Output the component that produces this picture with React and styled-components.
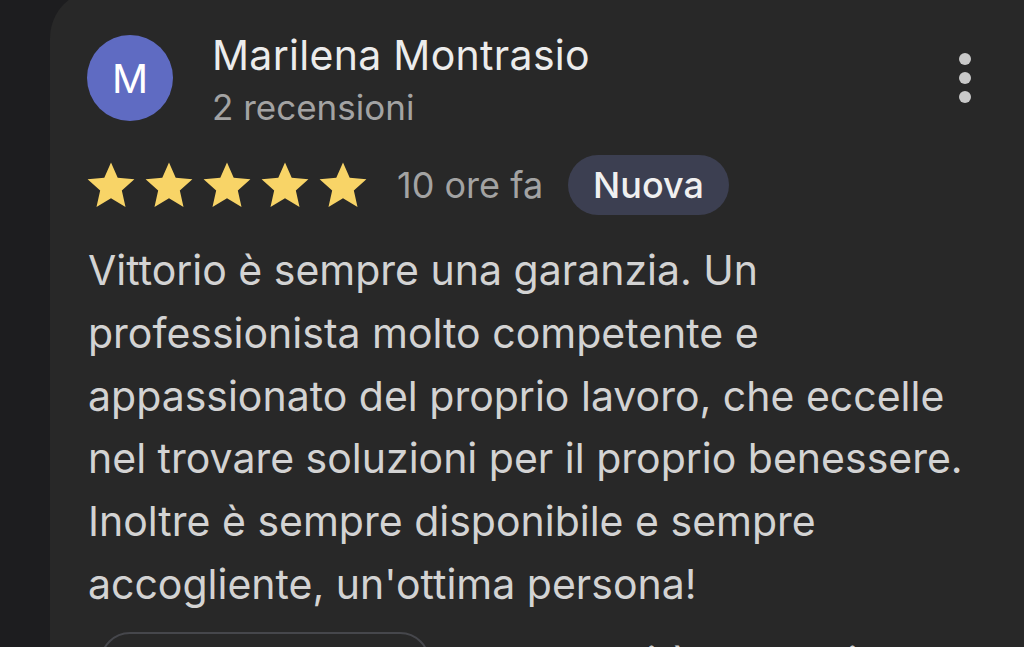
import React from 'react'
import styled, { createGlobalStyle } from 'styled-components'

const GlobalStyle = createGlobalStyle`
  html, body {
    margin: 0;
    padding: 0;
    background: #1d1d1f;
    overflow: hidden;
  }
  body {
    font-family: Inter, "Liberation Sans", Arial, sans-serif;
    -webkit-font-smoothing: antialiased;
  }
`

const Page = styled.div`
  width: 1024px;
  height: 647px;
  overflow: hidden;
  padding-left: 50px;
  box-sizing: border-box;
`

const Card = styled.div`
  width: 1000px;
  margin-top: -10px;
  box-sizing: border-box;
  background: #282828;
  border-radius: 48px 0 0 0;
  padding: 40px 70px 0 37px;
  display: flex;
  flex-direction: column;
`

const Header = styled.div`
  display: flex;
  align-items: flex-start;
`

const Avatar = styled.div`
  width: 86px;
  height: 86px;
  margin-top: 5px;
  border-radius: 50%;
  background: #5f6bc2;
  color: #fff;
  display: flex;
  align-items: center;
  justify-content: center;
  font-size: 40px;
  font-weight: 400;
  flex-shrink: 0;
`

const Who = styled.div`
  margin-left: 39px;
  flex: 1;
  display: flex;
  flex-direction: column;
  gap: 5px;
`

const Name = styled.div`
  font-size: 41px;
  line-height: 50px;
  color: #ececec;
  letter-spacing: 0.3px;
`

const Sub = styled.div`
  font-size: 35px;
  line-height: 44px;
  color: #a3a3a3;
`

const Kebab = styled.button`
  background: none;
  border: 0;
  padding: 0;
  margin: 23px 0 0 0;
  width: 30px;
  display: flex;
  flex-direction: column;
  align-items: center;
  gap: 7px;
`

const Dot = styled.span`
  width: 12px;
  height: 12px;
  border-radius: 50%;
  background: #c9c9c9;
`

const Meta = styled.div`
  display: flex;
  align-items: center;
  margin-top: 26px;
  height: 60px;
`

const Stars = styled.div`
  display: flex;
  gap: 6px;
  margin-left: -2px;
`

const When = styled.span`
  margin-left: 28px;
  font-size: 36px;
  color: #a3a3a3;
`

const Badge = styled.span`
  margin-left: 25px;
  height: 60px;
  padding: 0 25px;
  border-radius: 30px;
  background: #3c3f51;
  color: #f0f0f0;
  font-size: 36px;
  font-weight: 500;
  display: flex;
  align-items: center;
`

const Body = styled.p`
  margin: 24px 0 0 1px;
  font-size: 41px;
  line-height: 62.8px;
  color: #d3d3d3;
  white-space: nowrap;
`

const Actions = styled.div`
  display: flex;
  align-items: flex-start;
  margin-top: 16px;
`

const OutlineButton = styled.button`
  margin-left: 13px;
  width: 330px;
  height: 60px;
  border: 2px solid #46474c;
  border-radius: 30px;
  background: transparent;
`

const LinkText = styled.span`
  margin-left: 190px;
  margin-top: 6px;
  font-size: 41px;
  line-height: 48px;
  color: #cfcfcf;
`

const Star = () => (
  <svg width="52" height="52" viewBox="0 0 24 24">
    <path
      fill="#f8d467"
      d="M12 1.6l3.1 7.1 7.7.7-5.8 5.1 1.7 7.6L12 18.1l-6.7 4 1.7-7.6-5.8-5.1 7.7-.7z"
    />
  </svg>
)

const lines = [
  'Vittorio è sempre una garanzia. Un',
  'professionista molto competente e',
  'appassionato del proprio lavoro, che eccelle',
  'nel trovare soluzioni per il proprio benessere.',
  'Inoltre è sempre disponibile e sempre',
  "accogliente, un'ottima persona!",
]

export default function App() {
  return (
    <>
      <GlobalStyle />
      <Page>
        <Card>
          <Header>
            <Avatar>M</Avatar>
            <Who>
              <Name>Marilena Montrasio</Name>
              <Sub>2 recensioni</Sub>
            </Who>
            <Kebab aria-label="Altre opzioni">
              <Dot />
              <Dot />
              <Dot />
            </Kebab>
          </Header>
          <Meta>
            <Stars>
              {[0, 1, 2, 3, 4].map((i) => (
                <Star key={i} />
              ))}
            </Stars>
            <When>10 ore fa</When>
            <Badge>Nuova</Badge>
          </Meta>
          <Body>
            {lines.map((l, i) => (
              <React.Fragment key={i}>
                {l}
                {i < lines.length - 1 && <br />}
              </React.Fragment>
            ))}
          </Body>
          <Actions>
            <OutlineButton />
            <LinkText>Ti è stata utile?</LinkText>
          </Actions>
        </Card>
      </Page>
    </>
  )
}
